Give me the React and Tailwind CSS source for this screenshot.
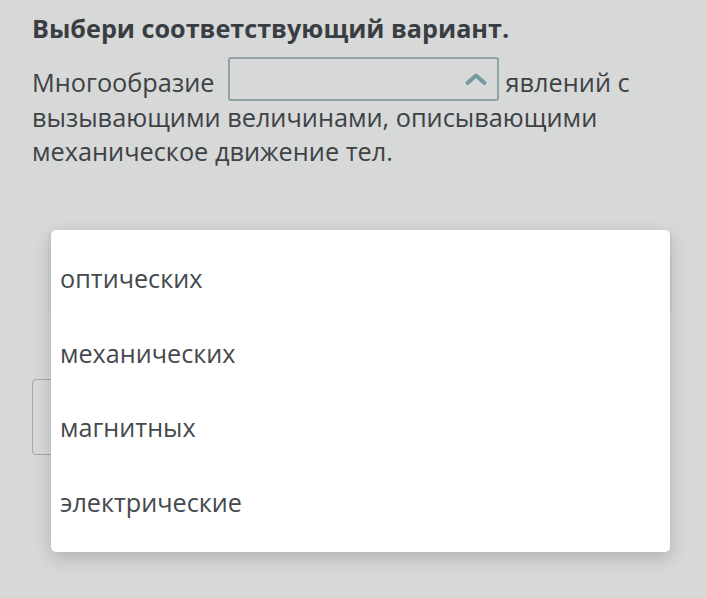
export default function App() {
  const options = ["оптических", "механических", "магнитных", "электрические"];
  return (
    <div
      className="relative w-[706px] h-[598px] overflow-hidden bg-[#d7d8d8] text-[#3e4246]"
      style={{ fontFamily: '"Open Sans", "Noto Sans", sans-serif' }}
    >
      <div className="pl-[32px] pt-[10px] w-[645px]">
        <h1 className="text-[25.2px] font-bold leading-[36px] text-[#3a3e42]">
          Выбери соответствующий вариант.
        </h1>
        <p className="mt-[19px] text-[25.3px] leading-[34.6px]">
          Многообразие{" "}
          <span className="inline-flex align-middle items-center justify-end w-[271px] h-[44px] border-2 border-[#8fa2a5] rounded-[3px] pr-[9px] ml-[7px] -mt-[14px] -mb-[2px]">
            <svg width="24" height="14" viewBox="0 0 24 14">
              <path d="M3.5 11 L12 3.5 L20.5 11" fill="none" stroke="#74999e" strokeWidth="4" strokeLinecap="round" strokeLinejoin="round" />
            </svg>
          </span>{" "}
          явлений с вызывающими величинами, описывающими механическое движение тел.
        </p>
      </div>

      <div className="absolute left-[48px] top-[232px] w-[624px] h-[82px] rounded-[4px] bg-[#d0d1d1]" />
      <div className="absolute left-[32px] top-[379px] w-[40px] h-[76px] rounded-[4px] border border-[#a3a5a6]" />

      <div className="absolute left-[51px] top-[230px] w-[619px] h-[322px] bg-white rounded-[5px] shadow-[0_6px_18px_rgba(0,0,0,0.18)] pt-[12px] pl-[9px]">
        {options.map((o) => (
          <div key={o} className="h-[74.5px] flex items-center text-[25.2px] text-[#45494d]">
            {o}
          </div>
        ))}
      </div>
    </div>
  );
}
